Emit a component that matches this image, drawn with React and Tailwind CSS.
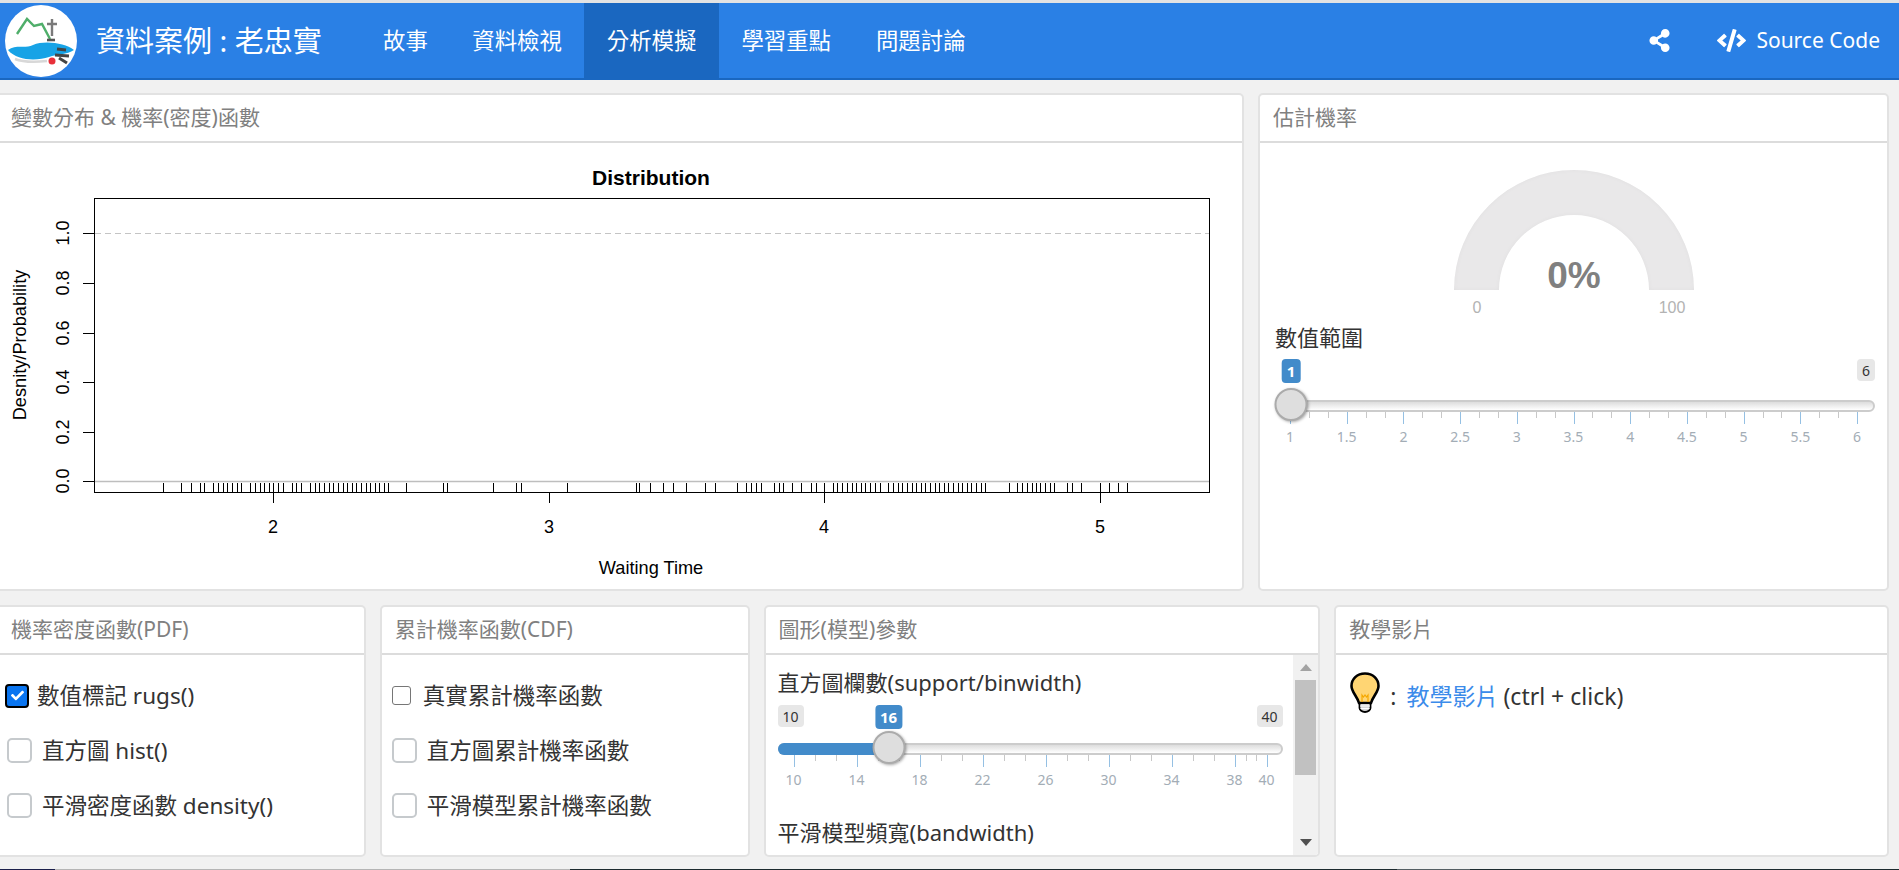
import { FaShareAlt, FaCode, FaCheck } from 'react-icons/fa'

const cjk = { fontFamily: '"Noto Sans", "Noto Sans CJK TC", sans-serif' }

const navItems = ['故事', '資料檢視', '分析模擬', '學習重點', '問題討論']

// rug positions read from the plot, in px
const rugs = [
  163, 181, 191, 200, 204, 213.5, 218, 223, 227, 232, 237, 241.5, 250, 255, 260, 264.5, 269, 273.5, 278, 283, 292, 296.5, 301,
  310, 315, 319.5, 324, 329, 333.5, 338, 343, 347, 352, 356.5, 361, 366, 370, 375, 379.5, 384, 388.5, 406.5, 443, 447.5, 493.5, 516.5, 521.5, 567.5,
  636, 639, 650, 663, 673.5, 686.5, 705, 715, 737, 746.5, 751.5, 756, 761, 774, 779, 783, 792, 801.5, 811, 816, 824, 833, 837.5, 842.5, 847, 852, 856.5, 861, 865.5, 870, 875, 880,
  888, 893.5, 898, 902.5, 907, 912, 916.5, 921, 925.5, 930, 935, 939.5, 944, 948, 953, 958, 962, 967, 971.5, 976, 981, 985, 1009, 1017.5, 1022, 1027, 1032, 1036, 1040.5, 1045.5, 1050, 1054, 1067, 1072, 1081.5, 1100, 1109, 1118, 1127.5,
]

function Card({ title, className, children }) {
  return (
    <section className={`flex flex-col bg-white border-2 border-[#e2e2e2] rounded-[5px] overflow-hidden ${className}`}>
      <h3 className="h-[48px] shrink-0 border-b-2 border-[#dcdcdc] flex items-center pl-[13px] text-[21px] font-normal text-[#808080]">{title}</h3>
      {children}
    </section>
  )
}

function Check({ label, checked, small, tight }) {
  return (
    <label className="h-[55px] flex items-center text-[22.5px] text-[#333]">
      {checked ? (
        <span className="ml-[7px] mr-[8px] w-[24px] h-[24px] flex items-center justify-center rounded-[4px] bg-[#0a75f0] border-2 border-black text-white text-[13px]">
          <FaCheck />
        </span>
      ) : small ? (
        <span className="ml-[10px] mr-[12px] w-[19px] h-[19px] rounded-[3px] border border-[#767676] bg-white" />
      ) : (
        <span className={`${tight ? 'ml-[10px]' : 'ml-[9px]'} mr-[10px] w-[25px] h-[25px] rounded-[5px] border-2 border-[#c6cacd] bg-white`} />
      )}
      <span>{label}</span>
    </label>
  )
}

// ion.rangeSlider look: absolute pieces sit on top of the track
function Slider({ width, from, min, max, labels, minors, fill, badgeTop = 0 }) {
  return (
    <div className="relative h-[88px]" style={{ width }}>
      {min && <span className="absolute left-0 h-[22px] px-[5px] flex items-center rounded-[4px] bg-[#e7e7e7] text-[14px] text-[#333]" style={{ top: badgeTop }}>{min}</span>}
      <span className="absolute right-0 h-[22px] px-[5px] flex items-center rounded-[4px] bg-[#e7e7e7] text-[14px] text-[#333]" style={{ top: badgeTop }}>{max}</span>
      <span className="absolute h-[24px] flex items-center justify-center rounded-[4px] bg-[#428bca] text-[15px] font-bold text-white -translate-x-1/2 px-[5px]" style={{ left: from, top: badgeTop }}>{fill}</span>
      <div className="absolute left-0 right-0 top-[38px] h-[12px] rounded-full border-2 border-[#cccccc] bg-gradient-to-b from-[#dddddd] to-white" />
      {from > 40 && <div className="absolute left-0 top-[38px] h-[12px] rounded-l-full bg-[#428bca]" style={{ width: from }} />}
      {minors.map(x => (
        <span key={x} className="absolute top-[50px] h-[6px] w-px bg-[#c8c8c8]" style={{ left: x }} />
      ))}
      {labels.map(l => (
        <span key={l.t} className="absolute top-[50px] h-[12px] w-px bg-[#95c0e3]" style={{ left: l.x }} />
      ))}
      {labels.map(l => (
        <span key={l.t} className="absolute top-[66px] text-[14px] leading-[18px] text-[#a3adb6] -translate-x-1/2" style={{ left: l.x }}>{l.t}</span>
      ))}
      <span className="absolute top-[26px] w-[33px] h-[33px] -translate-x-1/2 rounded-full bg-[#dedede] border-[2.5px] border-[#ababab] shadow-[1px_1px_3px_rgba(0,0,0,0.35)]" style={{ left: from }} />
    </div>
  )
}

function Plot() {
  const yTicks = [[233, '1.0'], [283, '0.8'], [333, '0.6'], [382, '0.4'], [432, '0.2'], [481, '0.0']]
  const xTicks = [[273, '2'], [549, '3'], [824, '4'], [1100, '5']]
  const font = '"Liberation Sans", Arial, sans-serif'
  return (
    <svg width="1244" height="446" viewBox="-2 143 1244 446" className="block" fontFamily={font} fill="#000">
      <text x="651" y="185" fontSize="21" fontWeight="bold" textAnchor="middle">Distribution</text>
      <rect x="94.5" y="198.5" width="1115" height="294" fill="none" stroke="#000" />
      <line x1="95" x2="1209" y1="233.5" y2="233.5" stroke="#c4c4c4" strokeDasharray="6 4" />
      <line x1="95" x2="1209" y1="481.5" y2="481.5" stroke="#bebebe" strokeWidth="1.5" />
      {rugs.map(x => (
        <line key={x} x1={Math.floor(x) + 0.5} x2={Math.floor(x) + 0.5} y1="483" y2="492" stroke="#000" />
      ))}
      {yTicks.map(([y, t]) => (
        <g key={t}>
          <line x1="83" x2="94" y1={y + 0.5} y2={y + 0.5} stroke="#000" />
          <text transform={`translate(69 ${y}) rotate(-90)`} fontSize="18" textAnchor="middle">{t}</text>
        </g>
      ))}
      {xTicks.map(([x, t]) => (
        <g key={t}>
          <line x1={x + 0.5} x2={x + 0.5} y1="492" y2="503" stroke="#000" />
          <text x={x} y="533" fontSize="18" textAnchor="middle">{t}</text>
        </g>
      ))}
      <text x="651" y="574" fontSize="18.2" textAnchor="middle">Waiting Time</text>
      <text transform="translate(26 345) rotate(-90)" fontSize="18.2" textAnchor="middle">Desnity/Probability</text>
    </svg>
  )
}

function Gauge() {
  return (
    <svg width="260" height="165" viewBox="0 0 260 165" className="block mx-auto" fontFamily='"Liberation Sans", Arial, sans-serif'>
      <defs>
        <filter id="gaugeShade" x="-5%" y="-5%" width="110%" height="110%">
          <feGaussianBlur in="SourceAlpha" stdDeviation="2" result="b" />
          <feComposite in="SourceAlpha" in2="b" operator="out" result="edge" />
          <feFlood floodColor="#000" floodOpacity="0.08" />
          <feComposite in2="edge" operator="in" result="shade" />
          <feMerge>
            <feMergeNode in="SourceGraphic" />
            <feMergeNode in="shade" />
          </feMerge>
        </filter>
      </defs>
      <path d="M10 120 A120 120 0 0 1 250 120 L205 120 A75 75 0 0 0 55 120 Z" fill="#e9e8e9" filter="url(#gaugeShade)" />
      <text x="130" y="118" fontSize="37" fontWeight="bold" fill="#808080" textAnchor="middle">0%</text>
      <text x="33" y="143" fontSize="16" fill="#b3b3b3" textAnchor="middle">0</text>
      <text x="228" y="143" fontSize="16" fill="#b3b3b3" textAnchor="middle">100</text>
    </svg>
  )
}

function Logo() {
  return (
    <svg width="72" height="72" viewBox="0 0 72 72" className="shrink-0">
      <circle cx="36" cy="36" r="36" fill="#fff" />
      <path d="M12 29 L22 14 L29 21 L37 19 L45 34" fill="none" stroke="#4fae6a" strokeWidth="2.4" />
      <path d="M42 19 h10 M47 14 v17" stroke="#7a7a7a" strokeWidth="2.4" fill="none" />
      <path d="M42 35 h8" stroke="#555" strokeWidth="2.6" fill="none" />
      <path d="M3 45 C11 39 20 44 28 40 C40 35 60 38 69 45 C62 50 52 49 44 52 C32 56 12 56 3 45 Z" fill="#17a3e6" />
      <path d="M10 54 C20 58 32 57 42 56" stroke="#d8d8d8" strokeWidth="2.5" fill="none" />
      <path d="M52 44 l9 1 M50 50 l14 1 M54 53 l8 5" stroke="#444" strokeWidth="3" fill="none" />
      <circle cx="47" cy="56" r="3.5" fill="#e8303a" />
    </svg>
  )
}

function Bulb() {
  return (
    <svg width="30" height="41" viewBox="0 0 30 41" className="shrink-0 mr-[10px]">
      <path d="M15 1.5 C7 1.5 1.5 7 1.5 14 C1.5 20 7 24 9 31 L21 31 C23 24 28.5 20 28.5 14 C28.5 7 23 1.5 15 1.5 Z" fill="#ffd573" stroke="#000" strokeWidth="2.6" />
      <path d="M12 31 V23 L13.5 25 L15 23 L16.5 25 L18 23 V31" fill="none" stroke="#f5a800" strokeWidth="1.2" />
      <path d="M9.5 31 H20.5 V36 C20.5 38 18 40 15 40 C12 40 9.5 38 9.5 36 Z" fill="#d8d8d8" stroke="#000" strokeWidth="1.8" />
      <path d="M10 34 H20 M10.5 36.5 H19.5" stroke="#fff" strokeWidth="1" />
    </svg>
  )
}

const rangeLabels = ['1', '1.5', '2', '2.5', '3', '3.5', '4', '4.5', '5', '5.5', '6'].map((t, i) => ({ t, x: 15 + i * 56.7 }))
const rangeMinors = Array.from({ length: 31 }, (_, i) => 15 + i * 18.9).filter((_, i) => i % 3 !== 0)

const binLabels = [10, 14, 18, 22, 26, 30, 34, 38].map((t, i) => ({ t: String(t), x: 16 + i * 63 })).concat({ t: '40', x: 489 })
const binMinors = Array.from({ length: 21 }, (_, i) => 16 + i * 21).filter((_, i) => i % 3 !== 0 && 16 + i * 21 < 457).concat([468, 478])

export default function App() {
  return (
    <div className="w-[1899px] h-[870px] overflow-hidden flex flex-col bg-[#f1f1f1]" style={cjk}>
      <div className="h-[3px] bg-[#e3e3e3]" />
      <nav className="h-[77px] shrink-0 flex bg-[#2a80e5] border-b-2 border-[#1a67c0] text-white">
        <div className="flex items-center pl-[5px] w-[378px]">
          <Logo />
          <span className="ml-[19px] text-[29px] whitespace-nowrap">資料案例 : 老忠實</span>
        </div>
        <div className="flex">
          {navItems.map((n, i) => (
            <a key={n} className={`h-full flex items-center text-[22.4px] whitespace-nowrap ${i === 2 ? 'bg-[#1a67c0]' : ''} ${i === 0 ? 'pl-[5px] pr-[22px]' : 'px-[22.5px]'}`}>{n}</a>
          ))}
        </div>
        <div className="ml-auto flex items-center pr-[19px]">
          <FaShareAlt className="text-[23px] mr-[46px]" />
          <FaCode className="text-[29px] mr-[10px]" />
          <span className="text-[21px]">Source Code</span>
        </div>
      </nav>

      <main className="flex-1 flex flex-col -ml-[4px] pr-[10px] pt-[13px] gap-[14px]">
        <div className="flex gap-[14px]">
          <Card title="變數分布 & 機率(密度)函數" className="w-[1248px] h-[498px]">
            <Plot />
          </Card>
          <Card title="估計機率" className="w-[631px] h-[498px]">
            <div className="pt-[27px]"><Gauge /></div>
            <div className="pl-[15px] text-[22px] text-[#333] -mt-[14px] mb-[8px]">數值範圍</div>
            <div className="pl-[15px]">
              <Slider width={600} from={16} max="6" fill="1" labels={rangeLabels} minors={rangeMinors} badgeTop={-3} />
            </div>
          </Card>
        </div>

        <div className="flex gap-[14px]">
          <Card title="機率密度函數(PDF)" className="w-[370px] h-[252px]">
            <div className="pt-[13px]">
              <Check label="數值標記 rugs()" checked />
              <Check label="直方圖 hist()" />
              <Check label="平滑密度函數 density()" />
            </div>
          </Card>
          <Card title="累計機率函數(CDF)" className="w-[370px] h-[252px]">
            <div className="pt-[13px]">
              <Check label="真實累計機率函數" small />
              <Check label="直方圖累計機率函數" tight />
              <Check label="平滑模型累計機率函數" tight />
            </div>
          </Card>
          <Card title="圖形(模型)參數" className="w-[557px] h-[252px]">
            <div className="flex-1 flex min-h-0">
              <div className="flex-1 overflow-hidden pl-[12px] pt-[11px]">
                <div className="text-[22px] text-[#333] leading-[32px] mb-[7px] whitespace-nowrap">直方圖欄數(support/binwidth)</div>
                <Slider width={505} from={111} min="10" max="40" fill="16" labels={binLabels} minors={binMinors} />
                <div className="text-[22px] text-[#333] leading-[32px] mt-[23px] whitespace-nowrap">平滑模型頻寬(bandwidth)</div>
              </div>
              <div className="w-[25px] shrink-0 bg-[#f1f1f1] flex flex-col items-center">
                <div className="h-[25px] flex items-center justify-center">
                  <span className="w-0 h-0 border-x-[6px] border-x-transparent border-b-[7px] border-b-[#a3a3a3]" />
                </div>
                <div className="w-[21px] h-[95px] bg-[#c1c1c1]" />
                <div className="mt-auto h-[25px] flex items-center justify-center">
                  <span className="w-0 h-0 border-x-[6px] border-x-transparent border-t-[7px] border-t-[#505050]" />
                </div>
              </div>
            </div>
          </Card>
          <Card title="教學影片" className="w-[555px] h-[252px]">
            <div className="flex items-end pl-[14px] pt-[17px] text-[23px] text-[#333]">
              <Bulb />
              <span className="leading-[30px] mb-[2px] whitespace-nowrap">
                :&nbsp;<a className="ml-[4px] text-[#3b8bea]">教學影片</a><span className="ml-[5px]">(ctrl + click)</span>
              </span>
            </div>
          </Card>
        </div>
      </main>

      <div className="h-px shrink-0 flex">
        <div className="w-[55px] bg-[#1b1f4a]" />
        <div className="w-[515px] bg-[#b5b5b5]" />
        <div className="w-[827px] bg-[#1c2a2e]" />
        <div className="w-[73px] bg-[#555f63]" />
        <div className="flex-1 bg-[#1c2a2e]" />
      </div>
    </div>
  )
}
